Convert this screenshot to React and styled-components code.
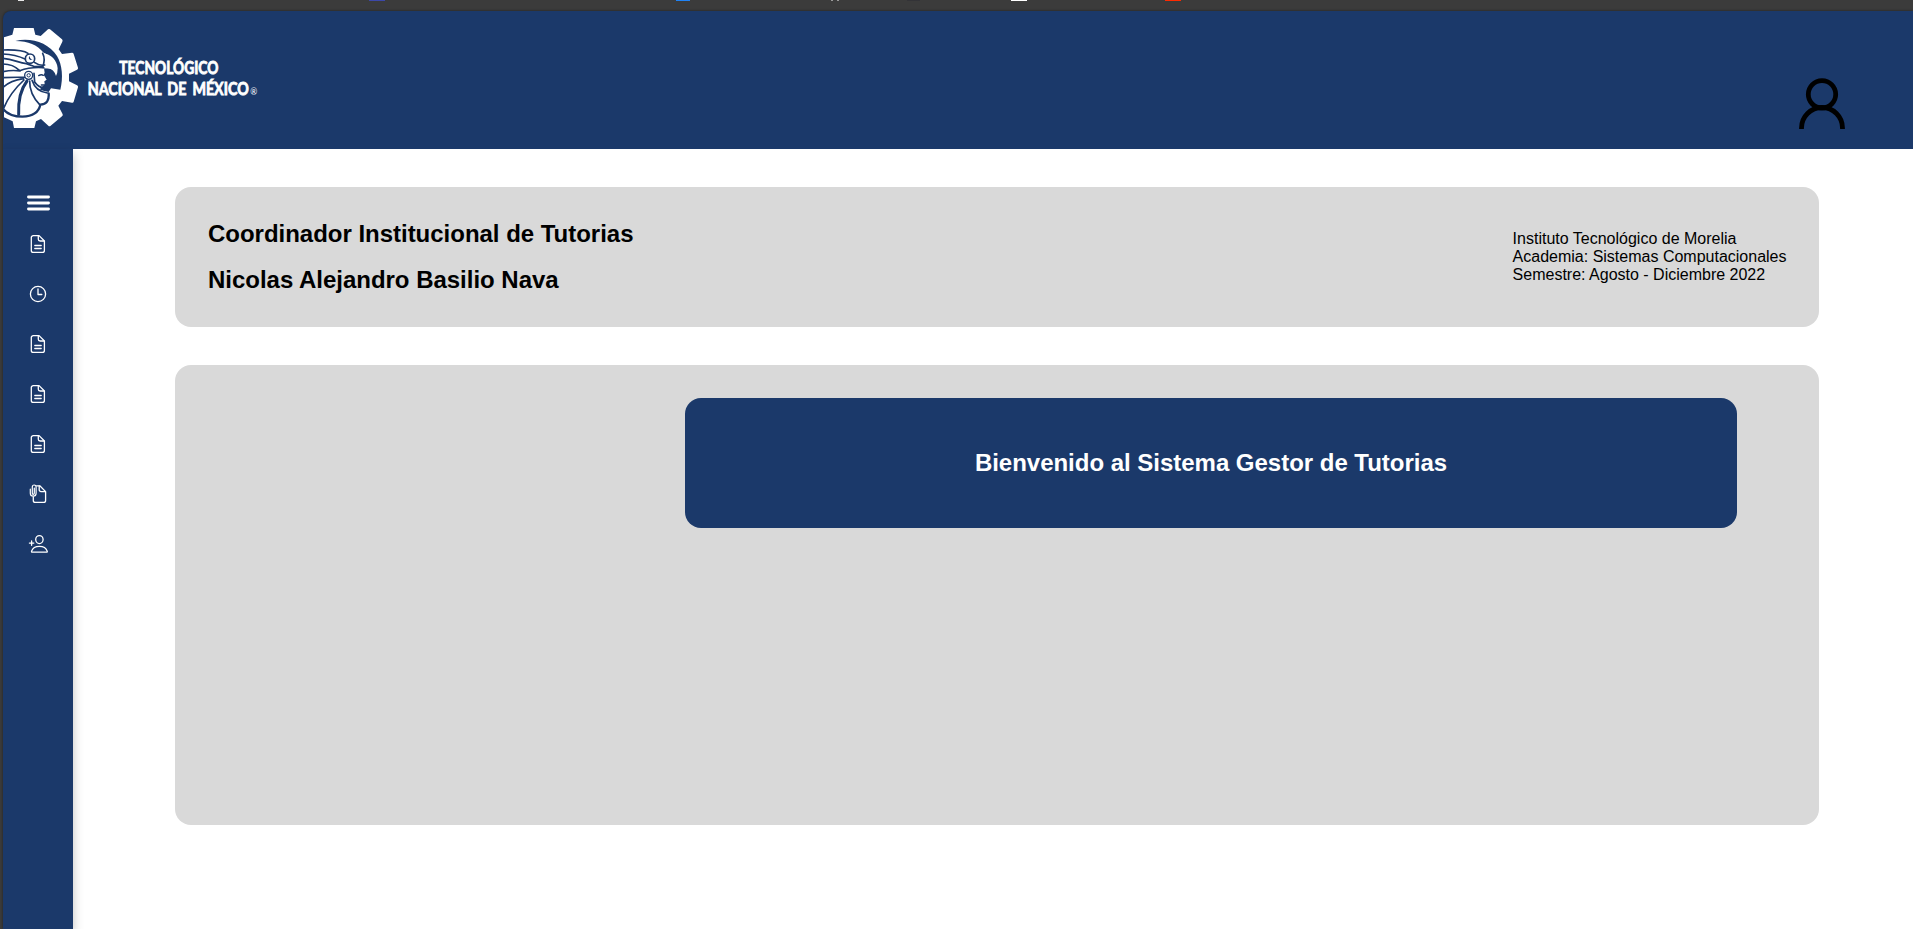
import React from 'react';
import styled, { createGlobalStyle } from 'styled-components';

const NAVY = '#1b396a';
const FRAME = '#3b3b3b';

const GlobalStyle = createGlobalStyle`
  * { box-sizing: border-box; }
  body { margin: 0; background: ${FRAME}; font-family: 'Liberation Sans', Arial, sans-serif; color: #000; overflow: hidden; }
`;

const Window = styled.div`
  height: 100vh;
  display: flex;
  flex-direction: column;
  padding-left: 3px;
  background: ${FRAME};
`;

const BookmarkStrip = styled.div`
  height: 11px;
  flex: none;
  display: flex;
  align-items: flex-start;
`;

const Bookmark = styled.span`
  flex: none;
  height: 1px;
  width: ${(p) => p.$width}px;
  margin-left: ${(p) => p.$gap}px;
  background: ${(p) => p.$color};
`;

const Page = styled.div`
  flex: 1;
  min-height: 0;
  display: flex;
  flex-direction: column;
  background: ${NAVY};
  border-top-left-radius: 8px;
  overflow: hidden;
  box-shadow: 0 0 3px rgba(0, 0, 0, 0.45);
`;

const Header = styled.header`
  height: 138px;
  flex: none;
  display: flex;
  justify-content: space-between;
  align-items: flex-start;
  padding: 17px 68.5px 0 0;
`;

const Account = styled.button`
  display: flex;
  margin: 50px 0 0;
  padding: 0;
  border: 0;
  background: none;
`;

const Body = styled.div`
  flex: 1;
  min-height: 0;
  display: flex;
  background: #fff;
`;

const Sidebar = styled.nav`
  width: 70px;
  flex: none;
  display: flex;
  flex-direction: column;
  align-items: center;
  padding-top: 45px;
  background: ${NAVY};
  box-shadow: 0 5px 10px rgba(0, 0, 0, 0.25);
`;

const MenuToggle = styled.button`
  display: flex;
  padding: 0 0 0 1px;
  margin-bottom: 7px;
  border: 0;
  background: none;
`;

const NavItem = styled.a`
  width: 24px;
  height: 50px;
  display: flex;
  align-items: center;
  justify-content: center;
`;

const Main = styled.main`
  flex: 1;
  display: flex;
  flex-direction: column;
  gap: 38px;
  padding: 38px 94px 0 102px;
`;

const Panel = styled.section`
  height: ${(p) => p.$height}px;
  display: flex;
  justify-content: ${(p) => (p.$end ? 'flex-end' : 'space-between')};
  align-items: ${(p) => (p.$end ? 'flex-start' : 'center')};
  padding: ${(p) => (p.$end ? '33px 82px' : '0 32.5px 0 33px')};
  border-radius: 16px;
  background: #d9d9d9;
`;

const Identity = styled.div`
  display: flex;
  flex-direction: column;
  gap: 19px;
  padding-bottom: 2px;
`;

const Title = styled.h2`
  margin: 0;
  font-size: 24px;
  line-height: 27px;
  font-weight: 700;
  letter-spacing: -0.02px;
`;

const Details = styled.p`
  margin: 0;
  font-size: 16px;
  line-height: 18px;
  white-space: nowrap;
`;

const Banner = styled.div`
  width: 1052px;
  height: 130px;
  display: flex;
  align-items: center;
  justify-content: center;
  padding-bottom: 2px;
  border-radius: 16px;
  background: ${NAVY};
  color: #fff;
`;

const Glyph = ({ children }) => (
  <svg width="20" height="20" viewBox="0 0 20 20" fill="none" stroke="#fff" strokeWidth="1.3" strokeLinecap="round" strokeLinejoin="round">
    {children}
  </svg>
);

const FileIcon = () => (
  <Glyph>
    <path d="M5.3 1.6h5.8l5.300 5.400v9.400a2 2 0 0 1-2 2H5.300a2 2 0 0 1-2-2V3.600a2 2 0 0 1 2-2z" />
    <path d="M10.300 1.800v3.400a1.800 1.800 0 0 0 1.800 1.800h4M6.800 11.500h6.400M6.800 14.500h6.400" />
  </Glyph>
);

const ClockIcon = () => (
  <Glyph>
    <circle cx="10" cy="10" r="7.6" />
    <path d="M10 5v5.500h3.800" />
  </Glyph>
);

const AttachmentIcon = () => (
  <Glyph>
    <path d="M8.600 1.800h3.200l5.800 5.800v8.800a2 2 0 0 1-2 2H7.300a2 2 0 0 1-2-2v-3.600" />
    <path d="M11.200 2v3.800a1.800 1.800 0 0 0 1.800 1.800h4.300" />
    <path strokeWidth="1.200" d="M2.300 5.200v4a2.900 2.900 0 0 0 5.800 0V2.900a1.900 1.900 0 0 0-3.800 0v6.400a1 1 0 0 0 2 0V4" />
  </Glyph>
);

const AddUserIcon = () => (
  <Glyph>
    <ellipse cx="11.4" cy="5.6" rx="3.7" ry="4" />
    <path d="M4.200 18.200c-.6 0-.8-.5-.6-1.100 1-3 4-4.800 7.800-4.800s6.800 1.800 7.800 4.800c.2.600 0 1.100-.6 1.100zM3.600 6.900v4.400M1.400 9.100h4.400" />
  </Glyph>
);

const MenuIcon = () => (
  <svg width="23" height="18" viewBox="0 0 23 18" fill="none" stroke="#fff" strokeWidth="2.9" strokeLinecap="round">
    <path d="M1.500 3h20M1.500 9h20M1.500 15h20" />
  </svg>
);

const UserIcon = () => (
  <svg width="46" height="52" viewBox="0 0 46 52" fill="none" stroke="#000" strokeWidth="4.8">
    <circle cx="23" cy="16.300" r="13.700" />
    <path d="M2.500 51v-1a20.500 20.500 0 0 1 41 0v1" />
  </svg>
);

const Logo = () => (
  <svg width="260" height="100" viewBox="9 84 780 300">
    <path
      fill="#fff"
      d="M12 112L37 104L42 84H101L106 104L122 108L144 88Q147 86 150 88L186 118Q189 121 187 125L176 148L186 162L216 158Q220 158 221 162L234 203Q235 207 231 209L207 221V244L231 256Q235 258 234 262L221 305Q220 309 216 308L186 303L175 317L188 343Q189 347 186 349L152 377Q148 380 145 377L123 357L108 364L103 384H42L38 364L12 352Z"
    />
    <path fill={NAVY} d="M46 123C92 112 146 128 171 168C187 194 190 235 181 269L153 265L146 276L120 270L133 236L128 205L158 206C163 186 154 167 131 158C111 135 86 123 46 123Z" />
    <path fill="#fff" d="M128 160C154 162 171 181 173 205Q173 220 168 228Q162 207 143 204L128 203Z" />
    <path fill="#fff" d="M103 211L132 205L134 218L131 224L140 239L133 244L134 251L130 258L117 262L103 244Z" />
    <path fill="#fff" d="M104 251C119 278 135 270 147 279Q152 307 119 312Z" />
    <g fill="none" stroke={NAVY} strokeWidth="5" strokeLinecap="round">
      <path d="M9 150C43 149 71 151 84 160M9 162C38 163 58 169 77 178M9 175C41 178 55 188 79 191L105 200L128 199" />
      <path d="M128 160Q137 177 128 201M103 187Q119 198 134 195" />
      <path d="M9 192Q39 192 59 212Q91 200 131 203M9 215Q37 209 60 213" />
      <path d="M9 233Q47 231 75 232M9 262Q31 242 70 236M10 327Q29 279 72 240" />
      <path strokeWidth="9" d="M81 243Q53 280 56 343" />
      <path d="M89 243Q88 281 119 314M96 241Q107 275 142 279M102 220L104 246Q114 261 135 266" />
      <path strokeWidth="7" d="M9 327Q28 350 67 350Q114 348 121 314Q149 313 146 280" />
      <path strokeWidth="4" d="M116 227Q124 222 130 226M124 255H132" />
    </g>
    <circle cx="90" cy="176" r="14" fill="#fff" stroke={NAVY} strokeWidth="5" />
    <path fill={NAVY} d="M90 167A8 8 0 0 0 98 178L91 180Q82 174 90 167Z" />
    <circle cx="86" cy="226" r="12" fill="#fff" stroke={NAVY} strokeWidth="4" />
    <circle cx="86" cy="226" r="5" fill="#fff" stroke={NAVY} strokeWidth="3" />
    <g fill="#fff" stroke="#fff" strokeWidth="2.5" fontFamily="Lato, sans-serif" fontWeight="700" fontSize="50">
      <text x="358" y="222" textLength="297" lengthAdjust="spacingAndGlyphs">TECNOLÓGICO</text>
      <text x="263" y="284" textLength="483" lengthAdjust="spacingAndGlyphs" wordSpacing="9">NACIONAL DE MÉXICO</text>
      <text x="751" y="284" fontSize="27" fontWeight="400" strokeWidth="0" textLength="21" lengthAdjust="spacingAndGlyphs">®</text>
    </g>
  </svg>
);

const bookmarks = [
  { gap: 15, width: 6, color: '#e8e8e8' },
  { gap: 345, width: 16, color: '#3c48a8' },
  { gap: 291, width: 14, color: '#2083f5' },
  { gap: 141, width: 2, color: '#999' },
  { gap: 4, width: 2, color: '#999' },
  { gap: 68, width: 13, color: '#333337' },
  { gap: 91, width: 16, color: '#fff' },
  { gap: 138, width: 16, color: '#ff2a00' },
];

const navIcons = [FileIcon, ClockIcon, FileIcon, FileIcon, FileIcon, AttachmentIcon, AddUserIcon];

export default function App() {
  return (
    <Window>
      <GlobalStyle />
      <BookmarkStrip>
        {bookmarks.map((b, i) => (
          <Bookmark key={i} $gap={b.gap} $width={b.width} $color={b.color} />
        ))}
      </BookmarkStrip>
      <Page>
        <Header>
          <Logo />
          <Account>
            <UserIcon />
          </Account>
        </Header>
        <Body>
          <Sidebar>
            <MenuToggle>
              <MenuIcon />
            </MenuToggle>
            {navIcons.map((Icon, i) => (
              <NavItem key={i}>
                <Icon />
              </NavItem>
            ))}
          </Sidebar>
          <Main>
            <Panel $height={140}>
              <Identity>
                <Title>Coordinador Institucional de Tutorias</Title>
                <Title>Nicolas Alejandro Basilio Nava</Title>
              </Identity>
              <Details>
                Instituto Tecnológico de Morelia
                <br />
                Academia: Sistemas Computacionales
                <br />
                Semestre: Agosto - Diciembre 2022
              </Details>
            </Panel>
            <Panel $height={460} $end>
              <Banner>
                <Title>Bienvenido al Sistema Gestor de Tutorias</Title>
              </Banner>
            </Panel>
          </Main>
        </Body>
      </Page>
    </Window>
  );
}
